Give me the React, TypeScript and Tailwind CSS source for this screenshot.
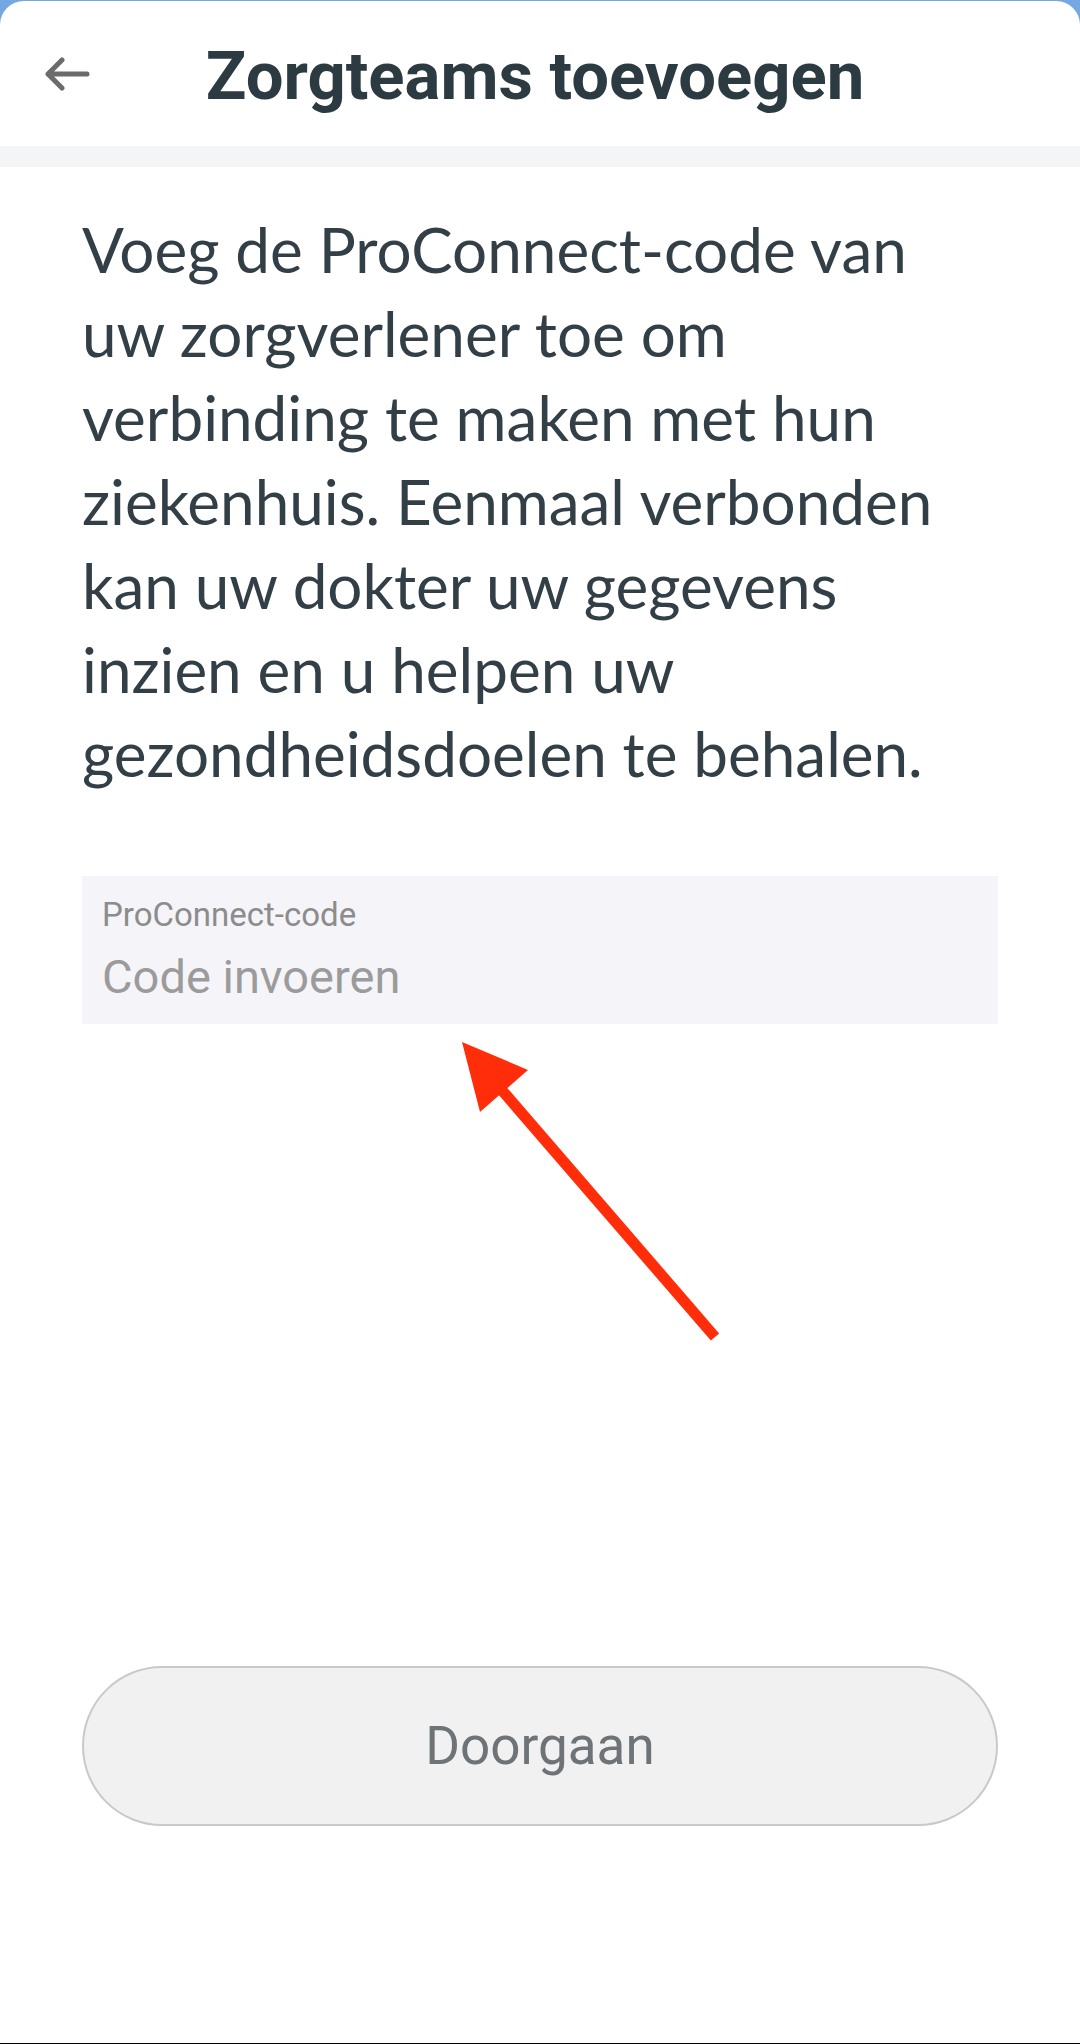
import React from "react";

export default function App() {
  const lines = [
    "Voeg de ProConnect-code van",
    "uw zorgverlener toe om",
    "verbinding te maken met hun",
    "ziekenhuis. Eenmaal verbonden",
    "kan uw dokter uw gegevens",
    "inzien en u helpen uw",
    "gezondheidsdoelen te behalen.",
  ];
  return (
    <div className="relative w-[1080px] h-[2044px] overflow-hidden bg-[#74a7e3] flex flex-col">
      <div className="mt-[1px] flex-1 bg-white rounded-t-[24px] flex flex-col">
        {/* Header */}
        <div className="h-[145px] grid grid-cols-[100px_1fr_110px] items-center">
          <div className="flex items-center pl-[44px]">
            <svg width="46" height="34" viewBox="0 0 46 34" fill="none">
              <path
                d="M4 17 H43 M18 3 L4 17 L18 31"
                stroke="#6b6b6b"
                strokeWidth="5"
                strokeLinecap="round"
                strokeLinejoin="round"
              />
            </svg>
          </div>
          <h1
            className="text-center text-[67px] leading-none font-bold text-[#2c3a41] mt-[6px] whitespace-nowrap"
            style={{ fontFamily: "Roboto, 'Liberation Sans', sans-serif" }}
          >
            Zorgteams toevoegen
          </h1>
          <div />
        </div>
        <div className="h-[21px] bg-[#f4f5f7]" />

        {/* Body */}
        <div className="flex-1 flex flex-col px-[82px]">
          <p
            className="mt-[40px] text-[62px] leading-[84px] text-[#333f46]"
            style={{ fontFamily: "Lato, 'Noto Sans', sans-serif" }}
          >
            {lines.map((l, i) => (
              <span key={i} className="block whitespace-nowrap">
                {l}
              </span>
            ))}
          </p>

          <div
            className="mt-[81px] h-[148px] bg-[#f5f5f9] pl-[20px] pt-[22px] flex flex-col"
            style={{ fontFamily: "Roboto, 'Liberation Sans', sans-serif" }}
          >
            <span className="text-[33px] leading-none text-[#8c8c8c]">ProConnect-code</span>
            <span className="mt-[22px] text-[47px] leading-none text-[#9b9b9b]">Code invoeren</span>
          </div>

          <div className="mt-[642px] h-[160px] rounded-full border-2 border-[#c9c9c9] bg-[#f1f1f1] flex items-center justify-center">
            <span
              className="text-[53px] leading-none text-[#6e7377]"
              style={{ fontFamily: "Roboto, 'Liberation Sans', sans-serif" }}
            >
              Doorgaan
            </span>
          </div>
        </div>
      </div>
      <div className="h-[1px] bg-black" />

      {/* Annotation arrow overlay */}
      <svg
        className="absolute top-0 left-0 pointer-events-none"
        width="1080"
        height="2044"
        viewBox="0 0 1080 2044"
      >
        <line x1="715" y1="1337" x2="500" y2="1088" stroke="#ff2d0a" strokeWidth="11" />
        <polygon points="462,1042 528,1070 480,1112" fill="#ff2d0a" />
      </svg>
    </div>
  );
}
